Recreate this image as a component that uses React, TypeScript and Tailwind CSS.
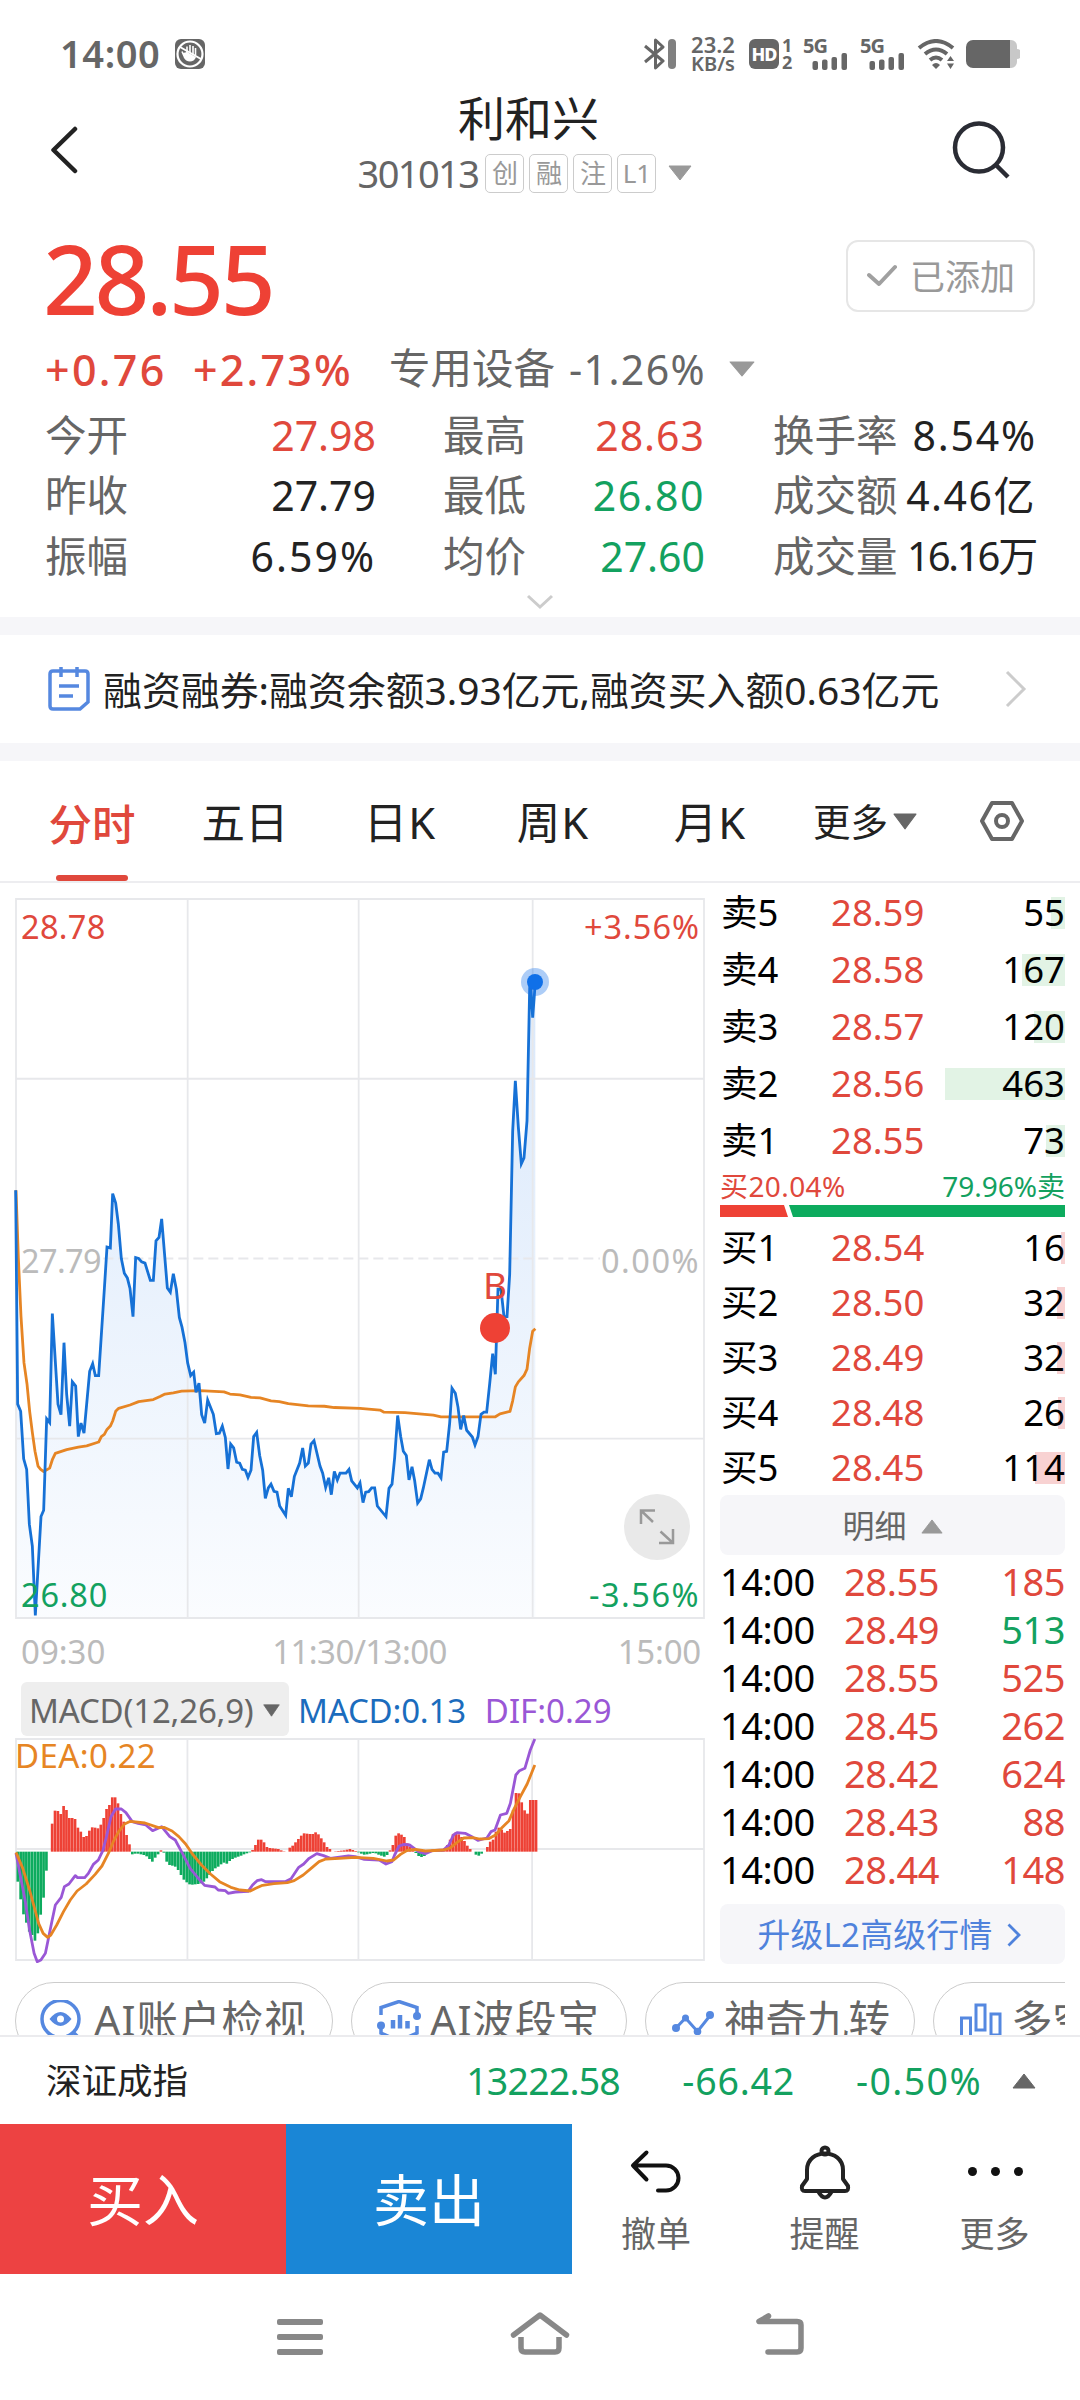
import React from "react";
import { clsx } from "clsx";

const UP = "text-[#e0483c]";
const DOWN = "text-[#13a15f]";

// Intraday price, x = time, y = price (grid units of the chart view box)
const pricePoints =
  "47,500 53,1008 62,1025 71,1138 80,1163 88,1293 97,1345 106,1510 123,1275 131,1260 140,1043 149,1052 157,793 174,1008 183,1033 192,862 200,985 209,1060 217,955 227,965 235,1085 243,1053 252,1077 269,930 278,912 286,940 296,940 313,735 321,635 331,637 338,508 347,530 355,580 364,662 373,697 382,708 390,733 399,800 407,660 416,662 425,670 435,673 451,714 460,714 468,620 477,612 485,568 502,732 511,742 520,698 529,735 538,802 546,825 555,862 563,910 572,940 581,932 588,980 597,958 605,1033 614,1053 623,998 640,1032 649,1078 658,1077 667,1060 676,1087 684,1162 692,1103 701,1112 710,1146 719,1148 727,1163 736,1165 744,1182 753,1165 761,1085 770,1075 779,1130 788,1165 796,1232 805,1207 813,1198 822,1215 831,1217 839,1250 857,1272 865,1208 874,1228 883,1180 899,1148 908,1112 916,1155 925,1148 933,1103 942,1095 960,1155 968,1172 977,1206 986,1183 994,1223 1003,1168 1012,1188 1020,1172 1038,1172 1047,1163 1055,1190 1072,1207 1080,1195 1089,1242 1097,1217 1106,1216 1115,1207 1124,1207 1132,1250 1158,1275 1167,1208 1176,1198 1184,1135 1193,1035 1202,1085 1210,1120 1219,1130 1227,1188 1236,1157 1244,1190 1253,1243 1262,1233 1270,1207 1288,1140 1296,1163 1305,1172 1314,1172 1323,1183 1331,1122 1340,1120 1349,1053 1356,970 1366,982 1374,1015 1382,1068 1391,1035 1400,1070 1417,1086 1425,1105 1434,1085 1443,1032 1452,1027 1460,1027 1469,960 1478,888 1486,937 1494,735 1503,735 1512,800 1521,800 1529,700 1538,360 1546,240 1555,350 1564,437 1572,423 1581,335 1589,20 1591,0 1598,90 1606,5";

const averagePoints =
  "48,500 55,660 63,800 72,910 81,960 89,1025 97,1075 105,1120 114,1155 122,1163 131,1168 149,1160 157,1140 166,1125 200,1116 235,1110 260,1107 296,1098 304,1085 313,1080 321,1068 331,1060 338,1048 347,1025 356,1018 390,1010 416,1002 460,997 480,990 495,984 520,981 545,977 600,976 672,979 690,984 720,986 753,992 780,993 813,1000 838,1002 865,1007 925,1012 973,1013 1003,1016 1080,1018 1140,1022 1152,1027 1215,1028 1300,1034 1323,1038 1486,1038 1500,1031 1530,1025 1538,1000 1546,967 1555,955 1572,940 1581,925 1589,875 1598,835 1606,829";

const difPoints =
  "35,730 45,800 55,870 65,960 75,1030 82,1055 90,1050 100,1030 106,990 115,930 122,885 135,862 142,830 152,822 166,797 171,803 187,803 195,790 206,763 217,750 227,722 235,680 245,620 255,597 268,597 278,608 292,635 305,640 322,645 337,662 357,650 375,680 387,690 403,730 420,775 440,808 452,826 475,831 482,840 498,842 504,850 520,846 548,844 558,825 568,812 578,809 587,815 630,815 643,806 660,772 671,762 683,745 700,731 715,737 730,745 770,738 785,740 805,748 838,750 853,762 866,755 872,735 882,708 893,703 905,705 925,725 940,731 955,722 980,720 992,705 1002,675 1010,668 1028,670 1045,682 1056,691 1076,684 1085,665 1094,660 1106,615 1120,610 1128,580 1140,495 1148,482 1160,475 1172,420 1182,387";

const deaPoints =
  "35,727 50,775 65,840 75,890 85,940 95,970 105,982 112,975 125,945 140,905 155,870 170,843 190,822 210,793 225,768 240,728 250,695 262,665 275,642 288,634 320,639 350,653 362,652 380,663 395,680 410,702 425,732 445,765 465,792 485,815 510,832 530,840 553,843 565,835 580,826 605,821 635,818 650,812 670,795 690,772 705,755 720,747 750,745 785,742 825,745 855,753 870,750 885,733 900,721 918,718 940,723 980,720 995,714 1010,697 1025,684 1045,683 1060,687 1080,686 1095,675 1108,655 1125,632 1135,600 1150,560 1165,522 1182,465";

// One value per minute, positive above the zero line
const macdBars = [
  -90, -143, -188, -213, -240, -250, -267, -245, -189, -138, -57, 0, 84, 123,
  122, 113, 137, 125, 101, 101, 98, 72, 60, 44, 47, 63, 73, 72, 70, 81, 101,
  128, 140, 163, 163, 145, 113, 90, 50, 22, -8, -6, -6, -8, -10, -14, -22, -30,
  -18, -8, 4, -3, -30, -40, -42, -45, -55, -70, -84, -92, -98, -99, -98, -97,
  -95, -90, -80, -70, -58, -50, -45, -38, -33, -36, -28, -22, -18, -15, -12, -8,
  -5, -2, 5, 20, 36, 36, 28, 14, 11, 10, 9, 8, 4, 1, 0, 12, 18, 28, 38, 48, 55,
  54, 53, 53, 58, 52, 40, 28, 14, 8, 0, 1, 2, 3, 4, 6, 8, 5, 2, -2, -6, -9, -8,
  -6, -4, -5, -9, -12, -15, -10, 4, 20, 48, 55, 51, 44, 25, 15, 5, -4, -13, -16,
  -13, -2, 2, 0, 2, 4, 6, 10, 20, 36, 52, 58, 52, 44, 32, 18, 8, 0, -9, -12, -6,
  0, 14, 30, 36, 60, 72, 66, 57, 62, 68, 125, 176, 175, 148, 124, 114, 155, 155,
  155,
];

const stats = [
  {
    left: { label: "今开", value: "27.98", style: "text-[#e0483c]" },
    middle: { label: "最高", value: "28.63", style: "text-[#e0483c] tracking-[1px]" },
    right: { label: "换手率", value: "8.54%", style: "tracking-[1.800px] -mr-[2px]" },
  },
  {
    left: { label: "昨收", value: "27.79", style: "" },
    middle: { label: "最低", value: "26.80", style: "text-[#13a15f] tracking-[1.500px]" },
    right: { label: "成交额", value: "4.46亿", style: "tracking-[1.500px] -mr-[1px]" },
  },
  {
    left: { label: "振幅", value: "6.59%", style: "tracking-[2px]" },
    middle: { label: "均价", value: "27.60", style: "text-[#13a15f]" },
    right: { label: "成交量", value: "16.16万", style: "text-[40px] tracking-[-2.200px] -mr-[1px]" },
  },
];

const sells = [
  { label: "卖5", price: "28.59", volume: 55 },
  { label: "卖4", price: "28.58", volume: 167 },
  { label: "卖3", price: "28.57", volume: 120 },
  { label: "卖2", price: "28.56", volume: 463 },
  { label: "卖1", price: "28.55", volume: 73 },
];

const buys = [
  { label: "买1", price: "28.54", volume: 16 },
  { label: "买2", price: "28.50", volume: 32 },
  { label: "买3", price: "28.49", volume: 32 },
  { label: "买4", price: "28.48", volume: 26 },
  { label: "买5", price: "28.45", volume: 114 },
];

const trades = [
  { price: "28.55", volume: 185, up: true },
  { price: "28.49", volume: 513, up: false },
  { price: "28.55", volume: 525, up: true },
  { price: "28.45", volume: 262, up: true },
  { price: "28.42", volume: 624, up: true },
  { price: "28.43", volume: 88, up: true },
  { price: "28.44", volume: 148, up: true },
];

const Triangle = ({ className, up }: { className: string; up?: boolean }) => (
  <svg viewBox="0 0 24 16" preserveAspectRatio="none" className={className}>
    <path
      d={up ? "M1 15 L12 1 L23 15 Z" : "M1 1 L23 1 L12 15 Z"}
      fill="currentColor"
      stroke="currentColor"
      strokeLinejoin="round"
    />
  </svg>
);

const Signal = () => (
  <div className="relative h-[31px] w-[45px]">
    <span className="absolute -top-[4px] left-0 text-[20px] leading-[21px] font-bold tracking-[-1px]">
      5G
    </span>
    <svg viewBox="0 0 45 31" className="h-[31px] w-[45px]" fill="currentColor">
      <rect x="9.500" y="22" width="5.500" height="9" rx="2" />
      <rect x="19" y="20.500" width="5.500" height="10.500" rx="2" />
      <rect x="28.500" y="18" width="5.500" height="13" rx="2" />
      <rect x="38.500" y="14" width="5.500" height="17" rx="2" />
    </svg>
  </div>
);

const StatusBar = () => (
  <div className="flex h-[90px] items-center pt-[18px] pl-[60px] pr-[60px] text-[#666]">
    <div className="-mt-[3px] text-[38px] leading-none font-semibold tracking-[0.600px]">
      14:00
    </div>
    <svg viewBox="0 0 30 30" className="ml-[15px] h-[30px] w-[30px]">
      <rect width="30" height="30" rx="6" fill="#666" />
      <circle cx="15" cy="15" r="12.500" fill="none" stroke="#fff" strokeWidth="2.200" />
      <path
        d="M9 17 L7 12.500 M12 14 V7.500 M15 14 V6 M18 15 V7 M20.500 16 V9"
        fill="none"
        stroke="#fff"
        strokeWidth="1.600"
      />
      <path d="M8 14 L12 13 L21 18 C19 24 11 24 8.500 18 Z" fill="#fff" />
      <path d="M5 8 L26 20" stroke="#fff" strokeWidth="2" />
    </svg>
    <svg viewBox="0 0 32 32" className="ml-auto h-8 w-8" fill="none">
      <path
        d="M1 8 L19 23 L11.500 30 V2 L19 9 L1 24"
        stroke="#666"
        strokeWidth="3"
        strokeLinejoin="round"
      />
      <rect x="24" y="1" width="8" height="30" rx="4" fill="#808080" />
    </svg>
    <div className="ml-[14px] w-[46px] text-center text-[22px] leading-[20px] font-semibold">
      <div>23.2</div>
      <div className="text-[20px]">KB/s</div>
    </div>
    <div className="ml-[13px] flex h-[30px] w-[30px] items-center justify-center rounded-md bg-[#666] text-[18px] leading-none font-extrabold tracking-[-1px] text-white">
      HD
    </div>
    <div className="ml-[3px] w-3 text-[18px] leading-[17px] font-bold">
      <div>1</div>
      <div>2</div>
    </div>
    <div className="ml-[9px]">
      <Signal />
    </div>
    <div className="ml-3">
      <Signal />
    </div>
    <svg viewBox="0 0 38 30" className="ml-3 h-[30px] w-[38px]" fill="none">
      <path
        d="M2 9 Q19 -5 36 9 M8 15 Q19 6 30 15 M13 21 Q19 16 25 21"
        stroke="#666"
        strokeWidth="4"
      />
      <path d="M15 26 Q19 22 23 26 L19 30 Z" fill="#666" />
      <path d="M30 22 L33.500 17 L37 22 Z M30 24.500 L33.500 30 L37 24.500 Z" fill="#666" />
    </svg>
    <svg viewBox="0 0 54 28" className="ml-[11px] h-7 w-[54px]">
      <path
        d="M44 0 h1 a6 6 0 0 1 6 6 v3 a5 5 0 0 1 0 10 v3 a6 6 0 0 1 -6 6 h-1 Z"
        fill="#c8c8c8"
      />
      <path d="M7 0 H44 V28 H7 a7 7 0 0 1 -7 -7 V7 a7 7 0 0 1 7 -7" fill="#666" />
    </svg>
  </div>
);

const Header = () => (
  <div className="flex h-[120px] items-start justify-between pl-[50px] pr-[68px]">
    <svg viewBox="0 0 28 48" className="mt-9 h-12 w-7" fill="none">
      <path
        d="M25 3 L3.500 24 L25 45"
        stroke="#222"
        strokeWidth="4.500"
        strokeLinecap="round"
        strokeLinejoin="round"
      />
    </svg>
    <div className="flex flex-col items-center pl-[20px]">
      <h1 className="pl-[7px] text-[47px] leading-[57px] text-[#222]">利和兴</h1>
      <div className="mt-[5px] flex h-[42px] items-center">
        <span className="text-[38px] leading-none tracking-[-1.600px] text-[#666]">
          301013
        </span>
        <div className="ml-[7px] flex gap-[5px]">
          {["创", "融", "注", "L1"].map((tag) => (
            <span
              key={tag}
              className="flex h-[39px] w-[39px] items-center justify-center rounded-[5px] border border-[#ccc] text-[26px] leading-none text-[#999]"
            >
              {tag}
            </span>
          ))}
        </div>
        <Triangle className="ml-[12px] h-4 w-6 text-[#999]" />
      </div>
    </div>
    <svg viewBox="0 0 60 60" className="mt-[30px] h-[60px] w-[60px]" fill="none">
      <circle cx="27" cy="27.500" r="24" stroke="#2a2c34" strokeWidth="4.500" />
      <path d="M44 45 L56 57" stroke="#2a2c34" strokeWidth="4.500" />
    </svg>
  </div>
);

const Quote = () => (
  <div className="h-[407px] px-[45px] pt-[30px]">
    <div className="flex h-[72px] items-center justify-between">
      <div className="-ml-[2px] pt-[3px] text-[96px] leading-none font-medium tracking-[-3.300px] text-[#ee4135]">
        28.55
      </div>
      <div className="flex h-[72px] w-[189px] items-center rounded-xl border-2 border-[#e6e6e6] pl-[19px] text-[35px] leading-none whitespace-nowrap text-[#999]">
        <svg viewBox="0 0 30 24" className="mr-[13px] h-6 w-[30px]" fill="none">
          <path
            d="M2 11 L12 20 L28 3"
            stroke="#a0a0a0"
            strokeWidth="4"
            strokeLinecap="round"
            strokeLinejoin="round"
          />
        </svg>
        已添加
      </div>
    </div>
    <div className="mt-[26px] flex h-[62px] items-center text-[41px] leading-none whitespace-nowrap">
      <span className={clsx("w-[148px] text-[43px] font-medium tracking-[2.300px]", UP)}>+0.76</span>
      <span className={clsx("w-[196px] text-[43px] font-medium tracking-[2.200px]", UP)}>+2.73%</span>
      <span className="w-[180px] text-[41.500px] text-[#666]">专用设备</span>
      <span className="tracking-[1.400px] text-[#666]">-1.26%</span>
      <Triangle className="ml-[23px] h-4 w-[26px] text-[#999]" />
    </div>
    <div className="mt-[5px] text-[41px] leading-none whitespace-nowrap text-[#222]">
      {stats.map(({ left, middle, right }) => (
        <div key={left.label} className="flex h-[60.500px] items-center">
          <span className="w-[130px] text-[41.500px] text-[#666]">{left.label}</span>
          <span className={clsx("w-[201px] text-right", left.style)}>{left.value}</span>
          <span className="ml-[67px] w-[110px] text-[41.500px] text-[#666]">{middle.label}</span>
          <span className={clsx("w-[152px] text-right", middle.style)}>{middle.value}</span>
          <span className="ml-[68px] text-[41.500px] text-[#666]">{right.label}</span>
          <span className={clsx("ml-auto", right.style)}>{right.value}</span>
        </div>
      ))}
    </div>
    <svg viewBox="0 0 28 16" className="mx-auto mt-[7px] h-4 w-7" fill="none">
      <path d="M2 2 L14 13 L26 2" stroke="#ccc" strokeWidth="3" />
    </svg>
  </div>
);

const News = () => (
  <div className="flex h-[144px] items-center border-y-[18px] border-[#f6f6f9] pl-[47px] pr-[53px]">
    <svg viewBox="0 0 44 46" className="h-[46px] w-11" fill="none">
      <path
        d="M6 5 H38 Q41 5 41 8 V36 L33 43 H6 Q3 43 3 40 V8 Q3 5 6 5 Z"
        stroke="#5588e0"
        strokeWidth="3.500"
      />
      <path
        d="M14 1 V11 M30 1 V11 M12 20 H32 M12 30 H26"
        stroke="#5588e0"
        strokeWidth="3.500"
      />
    </svg>
    <span className="ml-3 pt-[2px] text-[38.900px] leading-none whitespace-nowrap text-[#222]">
      融资融券:融资余额3.93亿元,融资买入额0.63亿元
    </span>
    <svg viewBox="0 0 22 38" className="ml-auto h-[38px] w-[22px]" fill="none">
      <path d="M2 2 L19 19 L2 36" stroke="#ccc" strokeWidth="3" />
    </svg>
  </div>
);

const Tabs = () => (
  <div className="flex h-[122px] items-center border-b-2 border-[#ededf0] text-[43.500px] leading-none whitespace-nowrap text-[#222]">
    <div className="flex h-full w-[184px] flex-col items-center justify-between pt-[42px] font-medium text-[#e0483c]">
      <span>分时</span>
      <span className="h-[6px] w-[72px] rounded-full bg-[#e0483c]" />
    </div>
    <span className="w-[122px] pt-[3px] text-center">五日</span>
    <span className="w-[188px] pt-[3px] text-center tracking-[1px]">日K</span>
    <span className="w-[118px] pt-[3px] text-center tracking-[1px]">周K</span>
    <span className="w-[196px] pt-[3px] text-center tracking-[1px]">月K</span>
    <span className="ml-[5px] pt-[2px] text-[37.500px]">更多</span>
    <Triangle className="ml-[5px] h-[17px] w-6 text-[#666]" />
    <svg viewBox="0 0 46 42" className="ml-[62px] h-[42px] w-[46px]" fill="none">
      <path
        d="M13 3 H33 L43 21 L33 39 H13 L3 21 Z"
        stroke="#666"
        strokeWidth="4"
        strokeLinejoin="round"
      />
      <circle cx="23" cy="21" r="6" stroke="#666" strokeWidth="4" />
    </svg>
  </div>
);

const PriceChart = () => (
  <div className="relative mt-[15px] h-[720px] w-[690px] text-[32.500px] leading-none">
    <svg
      viewBox="48 -192 2064 1708"
      preserveAspectRatio="none"
      className="absolute top-[1px] left-[1px] h-[719px] w-[688px] overflow-visible"
      fill="none"
    >
      <defs>
        <linearGradient id="area" x1="0" y1="0" x2="0" y2="1">
          <stop offset="0" stopColor="#1470e8" stopOpacity="0.16" />
          <stop offset="1" stopColor="#1470e8" stopOpacity="0.02" />
        </linearGradient>
      </defs>
      <path d={`M${pricePoints} 1606,1516 48,1516 Z`} fill="url(#area)" />
      <g stroke="#e7e8eb" strokeWidth="1.800">
        <path
          d="M48 -192 H2112 V1516 H48 Z M563 -192 V1516 M1076 -192 V1516 M1598 -192 V1516 M48 235 H2112 M48 1090 H2112"
          vectorEffect="non-scaling-stroke"
        />
        <path
          d="M310 662 H1800"
          strokeDasharray="10 5"
          vectorEffect="non-scaling-stroke"
        />
      </g>
      <polyline points={averagePoints} stroke="#e68524" strokeWidth="2.800" strokeLinejoin="round" vectorEffect="non-scaling-stroke" />
      <polyline points={pricePoints} stroke="#1671d6" strokeWidth="2.800" vectorEffect="non-scaling-stroke" />
    </svg>
    <svg viewBox="0 0 690 720" className="absolute inset-0 h-[720px] w-[690px]">
      <circle cx="520" cy="84" r="14" fill="#1470e8" opacity="0.35" />
      <circle cx="520" cy="84" r="8" fill="#1070e8" />
      <circle cx="480" cy="430" r="15" fill="#ee4135" />
    </svg>
    <span className={clsx("absolute top-[13px] left-[6px] tracking-[0.300px]", UP)}>28.78</span>
    <span className={clsx("absolute top-[13px] right-[5px] tracking-[1px]", UP)}>+3.56%</span>
    <span className="absolute top-[347px] left-[6px] tracking-[-0.600px] text-[#bbb]">27.79</span>
    <span className="absolute top-[347px] right-[5px] tracking-[1.500px] text-[#bbb]">0.00%</span>
    <span className={clsx("absolute top-[681px] left-[6px] tracking-[0.800px]", DOWN)}>26.80</span>
    <span className={clsx("absolute top-[681px] right-[5px] tracking-[1.500px]", DOWN)}>-3.56%</span>
    <span className={clsx("absolute top-[368px] left-[468px] text-[37px]", UP)}>B</span>
    <div className="absolute top-[596px] left-[609px] h-[66px] w-[66px] rounded-full bg-[#e9e9e9]">
      <svg viewBox="0 0 66 66" className="h-[66px] w-[66px]" fill="none">
        <path
          d="M17 30 V16.500 H31 M17 16.500 L29 28 M36.500 37.500 L49 49 M49 35 V49 H35"
          stroke="#999"
          strokeWidth="2.500"
        />
      </svg>
    </div>
  </div>
);

const MacdChart = () => (
  <div className="relative mt-[2px] h-[223px] w-[690px]">
    <svg
      viewBox="35 387 1521 663"
      preserveAspectRatio="none"
      className="absolute top-[1px] left-[1px] h-[221px] w-[688px] overflow-visible"
      fill="none"
    >
      <path
        d="M35 387 H1556 V1050 H35 Z M414 387 V1050 M792 387 V1050 M1176 387 V1050 M35 717 H1556"
        stroke="#e7e8eb"
        strokeWidth="1.800"
        vectorEffect="non-scaling-stroke"
      />
      {macdBars.map((value, i) => (
        <rect
          key={i}
          x={36 + i * 6.33}
          y={value > 0 ? 725 - value : 725}
          width="5.900"
          height={Math.abs(value)}
          fill={value > 0 ? "#ee4135" : "#0dab5e"}
        />
      ))}
      <polyline points={difPoints} stroke="#9a57d6" strokeWidth="2.800" strokeLinejoin="round" vectorEffect="non-scaling-stroke" />
      <polyline points={deaPoints} stroke="#e68524" strokeWidth="2.800" strokeLinejoin="round" vectorEffect="non-scaling-stroke" />
    </svg>
    <span className="absolute top-[1px] left-0 text-[33px] leading-none tracking-[0.400px] text-[#e68524]">
      DEA:0.22
    </span>
  </div>
);

interface LevelProps {
  label: string;
  price: string;
  volume: number;
  sell?: boolean;
}
const Level = ({ label, price, volume, sell }: LevelProps) => (
  <div className={clsx("flex items-center pl-[1px]", sell ? "h-[57px]" : "h-[55px]")}>
    <span className="w-[110px] text-black">{label}</span>
    <span className={UP}>{price}</span>
    <div className="relative ml-auto flex h-8 w-[120px] items-center justify-end text-black">
      <span
        className={clsx("absolute top-0 right-0 h-full", sell ? "bg-[#e2f3e5]" : "bg-[#f8d2d2]")}
        style={{ width: volume * 0.259 }}
      />
      <span className="relative">{volume}</span>
    </div>
  </div>
);

const OrderBook = () => (
  <div className="ml-[14px] w-[345px] pt-[1px] text-[36.500px] leading-none">
    {sells.map((level) => (
      <Level key={level.label} {...level} sell />
    ))}
    <div className="mt-[3px] flex h-[28px] items-center justify-between text-[28px]">
      <span className={clsx("tracking-[0.400px]", UP)}>买20.04%</span>
      <span className={DOWN}>79.96%卖</span>
    </div>
    <svg viewBox="0 0 345 12" className="mt-[5px] h-3 w-[345px]">
      <path d="M0 0 H64 L68 12 H0 Z" fill="#ee4135" />
      <path d="M69 0 H345 V12 H73 Z" fill="#0dab5e" />
    </svg>
    <div className="mt-[3px]">
      {buys.map((level) => (
        <Level key={level.label} {...level} />
      ))}
    </div>
    <div className="flex h-[60px] items-center justify-center rounded-lg bg-[#f6f6f9] pt-[2px] text-[32px] text-[#666]">
      明细
      <Triangle up className="ml-[14px] h-[15px] w-[22px] text-[#999]" />
    </div>
    <div className="mt-[2px] text-[38px]">
      {trades.map((trade, i) => (
        <div key={i} className="flex h-[48px] items-center">
          <span className="w-[124px] tracking-[-0.500px] text-black">14:00</span>
          <span className={clsx("tracking-[-0.400px]", UP)}>{trade.price}</span>
          <span
            className={clsx("ml-auto tracking-[-0.500px]", trade.up ? UP : DOWN)}
          >
            {trade.volume}
          </span>
        </div>
      ))}
    </div>
    <div className="mt-[11px] flex h-[60px] items-center justify-center rounded-lg bg-[#f6f6f9] pt-[2px] pr-[7px] text-[32.800px] text-[#4f82dc]">
      <span className="tracking-[0.300px]">升级L2高级行情</span>
      <svg viewBox="0 0 14 24" className="ml-[14px] h-6 w-[14px]" fill="none">
        <path d="M1.500 1.500 L12 12 L1.500 22.500" stroke="currentColor" strokeWidth="2.800" />
      </svg>
    </div>
  </div>
);

const EyeIcon = () => (
  <svg viewBox="0 0 42 42" className="h-[42px] w-[42px]" fill="none" stroke="#5588e0" strokeWidth="3.500">
    <circle cx="20.500" cy="19" r="18.500" />
    <path d="M9.500 19 Q20.500 5 31.500 19 Q20.500 33 9.500 19 Z" fill="#5588e0" stroke="none" />
    <circle cx="20.500" cy="19" r="3.500" fill="#fff" stroke="none" />
    <path d="M33 32 L39 38" />
  </svg>
);

const WaveIcon = () => (
  <svg viewBox="0 0 46 42" className="h-[42px] w-[46px]" fill="none" stroke="#5588e0" strokeWidth="3.500">
    <path d="M5 15 V7.500 L23 1.500 L41 7.500 V14 M5 28 V33 L16 38 M41 26 V33 L30 38" />
    <path d="M17 20 V28.500 M24 15 V28.500 M31.500 21 V28.500" strokeWidth="4.500" />
    <circle cx="5" cy="25.500" r="4" fill="#5588e0" stroke="none" />
    <circle cx="41" cy="16" r="4" fill="#5588e0" stroke="none" />
  </svg>
);

const LineIcon = () => (
  <svg viewBox="0 0 42 42" className="h-[42px] w-[42px]" fill="none" stroke="#5588e0" strokeWidth="3">
    <path d="M4 28 L13.500 18 L25.500 31.500 L38.500 15" />
    <g fill="#5588e0" stroke="none">
      <circle cx="4" cy="28" r="4" />
      <circle cx="13.500" cy="18" r="3.500" />
      <circle cx="25.500" cy="31.500" r="3.800" />
      <circle cx="38" cy="15" r="4" />
    </g>
  </svg>
);

const BarsIcon = () => (
  <svg viewBox="0 0 42 42" className="h-[42px] w-[42px]" fill="none" stroke="#5588e0" strokeWidth="3">
    <rect x="1.500" y="18" width="9" height="20" />
    <rect x="16" y="5" width="9" height="25" />
    <rect x="31" y="14" width="9" height="21" />
  </svg>
);

const Chips = () => (
  <div className="mt-[19px] mr-[15px] ml-[15px] flex h-[53px] gap-[18px] overflow-hidden text-[41.500px] leading-none text-[#666]">
    <div className="flex h-[78px] w-[318px] shrink-0 items-center gap-[12px] rounded-full border border-[#ccc] pl-[24px] whitespace-nowrap">
      <EyeIcon />
      <span className="tracking-[1px]">AI账户检视</span>
    </div>
    <div className="flex h-[78px] w-[276px] shrink-0 items-center gap-[8px] rounded-full border border-[#ccc] pl-[24px] whitespace-nowrap">
      <WaveIcon />
      <span className="tracking-[1px]">AI波段宝</span>
    </div>
    <div className="flex h-[78px] w-[270px] shrink-0 items-center gap-[10px] rounded-full border border-[#ccc] pl-[26px] whitespace-nowrap">
      <LineIcon />
      神奇九转
    </div>
    <div className="flex h-[78px] w-[276px] shrink-0 items-center gap-[9px] rounded-full border border-[#ccc] pl-[26px] whitespace-nowrap">
      <BarsIcon />
      多空资金
    </div>
  </div>
);

const IndexBar = () => (
  <div className="flex h-[89px] items-center border-t-2 border-[#ebebee] pt-[1px] pr-[44px] pl-[46px] text-[37.500px] leading-none">
    <span className="text-[35.500px] text-[#222]">深证成指</span>
    <span className={clsx("ml-auto tracking-[-0.800px]", DOWN)}>13222.58</span>
    <span className={clsx("w-[175px] text-right tracking-[0.800px]", DOWN)}>-66.42</span>
    <span className={clsx("w-[187px] text-right tracking-[1.400px]", DOWN)}>-0.50%</span>
    <Triangle up className="ml-[30px] h-4 w-6 text-[#666]" />
  </div>
);

const Actions = () => (
  <div className="flex h-[150px] leading-none">
    <div className="flex w-[286px] items-center justify-center bg-[#ed4242] text-[56px] text-white">
      买入
    </div>
    <div className="flex w-[286px] items-center justify-center bg-[#1a86d6] text-[56px] text-white">
      卖出
    </div>
    <div className="flex flex-1 text-[35px] text-[#666]">
      <div className="flex w-[168px] flex-col items-center pt-5">
        <svg viewBox="0 0 54 54" className="h-[54px] w-[54px]" fill="none">
          <path
            d="M17.500 8.500 L4 21.500 L17.500 35.500 M4 21.500 H37 A12.500 12.500 0 0 1 37 46.500 H29"
            stroke="#111"
            strokeWidth="4"
            strokeLinecap="round"
            strokeLinejoin="round"
          />
        </svg>
        <span className="mt-[18px]">撤单</span>
      </div>
      <div className="flex w-[169px] flex-col items-center pt-5">
        <svg viewBox="0 0 54 58" className="-mb-1 h-[58px] w-[54px]" fill="none" stroke="#222" strokeWidth="4" strokeLinejoin="round">
          <path d="M9 35 V26 C9 4 45 4 45 26 V35 L50 42 Q51 47 47 47 H7 Q3 47 4 42 Z" />
          <circle cx="27" cy="7" r="3.500" />
          <path d="M20 47 Q27 60 34 47" />
        </svg>
        <span className="mt-[18px]">提醒</span>
      </div>
      <div className="flex w-[171px] flex-col items-center pt-5">
        <svg viewBox="0 0 58 54" className="h-[54px] w-[58px]" fill="#111">
          <circle cx="6.500" cy="27.500" r="4.500" />
          <circle cx="29.500" cy="27.500" r="4.500" />
          <circle cx="52.500" cy="27.500" r="4.500" />
        </svg>
        <span className="mt-[18px]">更多</span>
      </div>
    </div>
  </div>
);

const SystemNav = () => (
  <div className="flex h-[126px] items-start pt-[36px] pl-[277px]">
    <svg viewBox="0 0 46 52" className="h-[52px] w-[46px]">
      <g fill="#888">
        <rect x="0" y="9" width="46" height="6" rx="2" />
        <rect x="0" y="24" width="46" height="6" rx="2" />
        <rect x="0" y="39" width="46" height="6" rx="2" />
      </g>
    </svg>
    <svg viewBox="0 0 60 52" className="ml-[187px] h-[52px] w-[60px]" fill="none" stroke="#888" strokeWidth="5.500">
      <path d="M3.500 25 L30 5 L56.500 25" strokeLinecap="round" strokeLinejoin="round" />
      <path d="M11 27 V38 Q11 42 15 42 H45 Q49 42 49 38 V27" />
    </svg>
    <svg viewBox="0 0 50 52" className="ml-[185px] h-[52px] w-[50px]" fill="none" stroke="#888" strokeWidth="5.500">
      <path d="M13.500 6 L4 11.500 H42 Q46 11.500 46 15 V38 Q46 42 42 42 H13" strokeLinecap="round" strokeLinejoin="round" />
    </svg>
  </div>
);

const App = () => (
  <div className="flex h-[2400px] w-[1080px] flex-col overflow-hidden bg-white font-['Noto_Sans','Noto_Sans_CJK_SC',sans-serif]">
    <StatusBar />
    <Header />
    <Quote />
    <News />
    <Tabs />
    <div className="flex h-[1080px] pl-[15px]">
      <div className="w-[691px]">
        <PriceChart />
        <div className="flex h-[64px] items-center justify-between pt-[2px] pr-[5px] pl-[6px] text-[33px] leading-none text-[#bbb]">
          <span>09:30</span>
          <span className="pr-[4px] tracking-[-0.600px]">11:30/13:00</span>
          <span className="tracking-[-0.200px]">15:00</span>
        </div>
        <div className="flex h-[54px] items-center pl-[6px] text-[33px] leading-none">
          <div className="flex h-[54px] w-[268px] items-center rounded-md bg-[#eee] pt-[2px] pl-[8px] text-[#666]">
            <span className="tracking-[-0.200px]">MACD(12,26,9)</span>
            <Triangle className="ml-[9px] h-[13px] w-[17px]" />
          </div>
          <span className="ml-[9px] pt-[2px] tracking-[-0.200px] text-[#1b6cbd]">MACD:0.13</span>
          <span className="ml-[19px] pt-[2px] text-[#9a57d6]">DIF:0.29</span>
        </div>
        <MacdChart />
      </div>
      <OrderBook />
    </div>
    <Chips />
    <IndexBar />
    <Actions />
    <SystemNav />
  </div>
);

export default App;
